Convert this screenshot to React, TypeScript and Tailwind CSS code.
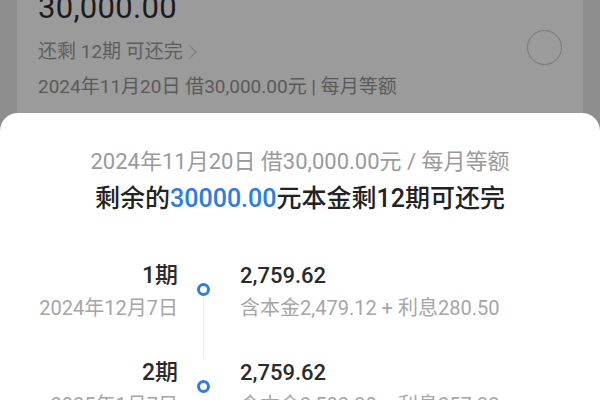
import React from 'react';

const rows = [
  { term: '1期', date: '2024年12月7日', amount: '2,759.62', detail: '含本金2,479.12 + 利息280.50' },
  { term: '2期', date: '2025年1月7日', amount: '2,759.62', detail: '含本金2,502.30 + 利息257.32' },
];

const font = "font-['Roboto','Noto_Sans_CJK_SC',sans-serif]";

export default function App() {
  return (
    <div className={`w-[600px] h-[400px] overflow-hidden bg-[#8e8e8e] ${font}`}>
      {/* dimmed page behind the sheet */}
      <div className="h-[113px] px-[17px] overflow-hidden">
        <div className="h-full bg-[#9b9b9b] pl-[21px] pr-[21px] flex items-start justify-between">
          <div className="flex flex-col -mt-[11px]">
            <div className="text-[31px] leading-[38px] text-[#1c1c1c] tracking-[0.3px]">30,000.00</div>
            <div className="mt-[13px] flex items-center text-[19px] leading-[24px] text-[#5e5e5e]">
              还剩 12期 可还完
              <svg className="ml-[6px]" width="8" height="14" viewBox="0 0 8 14" fill="none">
                <path d="M1 1l6 6-6 6" stroke="#7f7f7f" strokeWidth="1.3" strokeLinecap="round" strokeLinejoin="round" />
              </svg>
            </div>
            <div className="mt-[11px] text-[19px] leading-[24px] text-[#5a5a5a]">
              2024年11月20日 借30,000.00元 | 每月等额
            </div>
          </div>
          <div className="mt-[30px] w-[35px] h-[35px] rounded-full border-[1.5px] border-[#777]" />
        </div>
      </div>

      {/* bottom sheet */}
      <div className="h-[287px] bg-white rounded-t-[18px] flex flex-col items-center">
        <div className="mt-[35px] text-[22px] leading-[28px] text-[#9a9a9a]">
          2024年11月20日 借30,000.00元 / 每月等额
        </div>
        <div className="mt-[7px] text-[25px] leading-[32px] font-medium text-[#222]">
          剩余的<span className="text-[#2a7de1]">30000.00</span>元本金剩12期可还完
        </div>

        <div className="mt-[46px] w-full flex flex-col">
          {rows.map((r, i) => (
            <div key={r.term} className="flex h-[97px]">
              <div className="w-[178px] flex flex-col items-end">
                <div className="text-[23px] leading-[30px] font-medium text-[#2a2a2a]">{r.term}</div>
                <div className="mt-[4px] text-[20px] leading-[26px] text-[#a6a6a6]">{r.date}</div>
              </div>
              <div className="w-[50px] flex flex-col items-center">
                <div className="mt-[22px] w-[13px] h-[13px] rounded-full border-[3px] border-[#2b7de9] shrink-0" />
                {i < rows.length - 1 && <div className="w-px flex-1 bg-[#ececec]" />}
              </div>
              <div className="ml-[12px] flex flex-col">
                <div className="text-[22px] leading-[30px] font-medium text-[#2a2a2a]">{r.amount}</div>
                <div className="mt-[4px] text-[20px] leading-[26px] text-[#a6a6a6]">{r.detail}</div>
              </div>
            </div>
          ))}
        </div>
      </div>
    </div>
  );
}
